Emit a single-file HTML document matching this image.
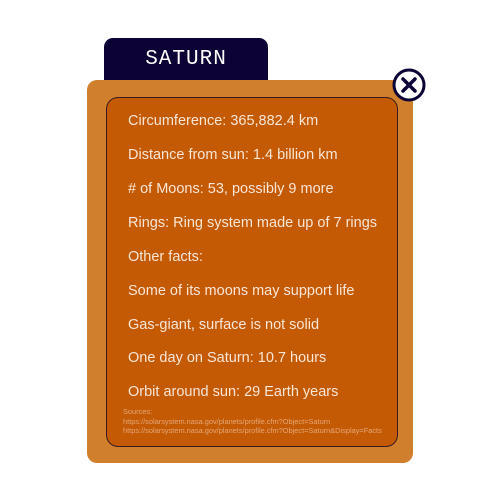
<!DOCTYPE html>
<html><head><style>
body{margin:0;width:500px;height:500px;background:#fff;position:relative;overflow:hidden;font-family:"Liberation Sans",sans-serif}
.tab{position:absolute;left:104px;top:38px;width:164px;height:50px;background:#0c0235;border-radius:9px 9px 0 0}
.tab span{position:absolute;left:0;right:0;top:10px;text-align:center;color:#fff;font-family:"Liberation Mono",monospace;font-size:21px;letter-spacing:1px}
.outer{position:absolute;left:87px;top:80px;width:326px;height:383px;background:#d0802c;border-radius:10px}
.inner{position:absolute;left:106px;top:97px;width:290px;height:348px;background:#c55a05;border:1px solid #3a1a20;border-radius:12px}
.l{position:absolute;left:128px;color:#f7e6d4;font-size:14.5px;white-space:nowrap}
.s{position:absolute;left:123px;color:#e3a778;font-size:7.4px;line-height:9.5px;top:407px}
.close{position:absolute;left:392px;top:68px}
</style></head><body>
<div class="tab"><span>SATURN</span></div>
<div class="outer"></div>
<div class="inner"></div>
<div class="l" style="top:113px">Circumference: 365,882.4 km</div>
<div class="l" style="top:147px">Distance from sun: 1.4 billion km</div>
<div class="l" style="top:181px"># of Moons: 53, possibly 9 more</div>
<div class="l" style="top:215px">Rings: Ring system made up of 7 rings</div>
<div class="l" style="top:249px">Other facts:</div>
<div class="l" style="top:283px">Some of its moons may support life</div>
<div class="l" style="top:317px">Gas-giant, surface is not solid</div>
<div class="l" style="top:350px">One day on Saturn: 10.7 hours</div>
<div class="l" style="top:384px">Orbit around sun: 29 Earth years</div>
<div class="s">Sources:<br>https://solarsystem.nasa.gov/planets/profile.cfm?Object=Saturn<br>https://solarsystem.nasa.gov/planets/profile.cfm?Object=Saturn&amp;Display=Facts</div>
<svg class="close" width="34" height="34" viewBox="0 0 34 34"><circle cx="17" cy="17" r="15" fill="#fff" stroke="#0c0235" stroke-width="3"/><path d="M11 11L23 23M23 11L11 23" stroke="#0c0235" stroke-width="3.5" stroke-linecap="round"/></svg>
</body></html>
